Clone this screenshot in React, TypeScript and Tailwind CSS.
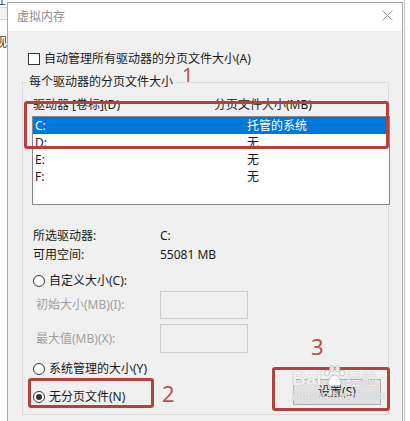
import React from 'react'

function Radio({ label, checked = false }: { label: string; checked?: boolean }) {
  return (
    <div className="flex h-[16px] items-center gap-[4px]">
      <span className="flex h-[12px] w-[12px] items-center justify-center rounded-full border border-[#333333] bg-white">
        {checked && <span className="h-[6px] w-[6px] rounded-full bg-[#333333]" />}
      </span>
      <span className="leading-[16px]">{label}</span>
    </div>
  )
}

const drives = [
  { name: 'C:', size: '托管的系统' },
  { name: 'D:', size: '无' },
  { name: 'E:', size: '无' },
  { name: 'F:', size: '无' },
]

export default function App() {
  return (
    <div className="relative flex h-[421px] w-[410px] overflow-hidden bg-white font-['Noto_Sans','Noto_Sans_CJK_SC',sans-serif] text-[12px] text-[#1a1a1a]">
      {/* window behind, left edge */}
      <div className="flex w-[7px] shrink-0 flex-col overflow-hidden bg-white text-[#333333]">
        <div className="h-[8px] overflow-hidden border-b border-[#d6d6d6]">
          <span className="-ml-[6px] -mt-[6px] block whitespace-nowrap leading-[12px]">性</span>
        </div>
        <div className="h-[12px] border-b border-[#d6d6d6] bg-[#f3f3f3]" />
        <div className="mt-[16px] overflow-hidden">
          <span className="-ml-[5px] block whitespace-nowrap leading-[14px]">视</span>
        </div>
      </div>

      {/* dialog */}
      <div className="mt-[2px] flex w-[396px] shrink-0 flex-col border-x border-t border-[#a8a8a8]">
        <div className="flex h-[28px] shrink-0 items-center justify-between bg-white pl-[9px] pr-[9px]">
          <span className="leading-[14px] text-[#8c8c8c]">虚拟内存</span>
          <svg width="11" height="11" viewBox="0 0 11 11" className="-mt-[3px]">
            <path d="M0.5 0.5L10.5 10.5M10.5 0.5L0.5 10.5" stroke="#9a9a9a" strokeWidth="1" fill="none" />
          </svg>
        </div>

        <div className="flex flex-1 flex-col bg-[#f0f0f0]">
          <div className="ml-[20px] mt-[22px] flex h-[12px] items-center gap-[4px]">
            <span className="h-[12px] w-[12px] border border-[#333333] bg-white" />
            <span className="leading-[14px]">自动管理所有驱动器的分页文件大小(A)</span>
          </div>

          <fieldset className="ml-[14px] mt-[10px] w-[367px] min-w-0 border border-[#dcdcdc]">
            <legend className="ml-[4px] px-[2px] leading-[14px]">每个驱动器的分页文件大小</legend>
            <div className="flex flex-col pb-[9px]">
              <div className="mt-[9px] flex h-[14px] items-center pl-[10px] leading-[14px]">
                <span className="w-[181px]">驱动器 [卷标](D)</span>
                <span>分页文件大小(MB)</span>
              </div>

              <div className="ml-[9px] mt-[4px] h-[89px] w-[358px] border border-[#828790] bg-white">
                {drives.map((d, i) => (
                  <div
                    key={d.name}
                    className={`flex h-[17px] items-center leading-[17px] ${i === 0 ? 'bg-[#0078d7] text-white' : ''}`}
                  >
                    <span className="w-[214px] pl-[2px]">{d.name}</span>
                    <span>{d.size}</span>
                  </div>
                ))}
              </div>

              <div className="mt-[23px] flex h-[16px] items-center pl-[10px] leading-[16px]">
                <span className="w-[127px]">所选驱动器:</span>
                <span>C:</span>
              </div>
              <div className="mt-[3px] flex h-[16px] items-center pl-[10px] leading-[16px]">
                <span className="w-[127px]">可用空间:</span>
                <span>55081 MB</span>
              </div>

              <div className="mt-[10px] pl-[10px]">
                <Radio label="自定义大小(C):" />
              </div>
              <div className="mt-[2px] flex items-center pl-[13px] text-[#a0a0a0]">
                <span className="w-[124px] leading-[16px]">初始大小(MB)(I):</span>
                <span className="h-[28px] w-[88px] border border-[#cccccc] bg-[#f0f0f0]" />
              </div>
              <div className="mt-[5px] flex items-center pl-[13px] text-[#a0a0a0]">
                <span className="w-[124px] leading-[16px]">最大值(MB)(X):</span>
                <span className="h-[29px] w-[88px] border border-[#cccccc] bg-[#f0f0f0]" />
              </div>

              <div className="mt-[8px] flex items-end justify-between">
                <div className="flex flex-col pl-[10px]">
                  <Radio label="系统管理的大小(Y)" />
                  <div className="mt-[12px]">
                    <Radio checked label="无分页文件(N)" />
                  </div>
                </div>
                <button className="mr-[7px] h-[26px] w-[88px] border border-[#adadad] bg-[#e1e1e1] leading-[16px] text-[#1a1a1a]">
                  设置(S)
                </button>
              </div>
            </div>
          </fieldset>
        </div>
      </div>

      {/* window behind, right edge */}
      <div className="flex w-[7px] shrink-0 bg-white">
        <div className="ml-[1px] h-full w-px bg-[#c4c4c4]" />
      </div>

      {/* annotations */}
      <div className="pointer-events-none absolute left-[24px] top-[101px] h-[48px] w-[365px] rounded-[3px] border-[3px] border-[#b5413f]" />
      <div className="pointer-events-none absolute left-[28px] top-[378px] h-[30px] w-[126px] rounded-[3px] border-[3px] border-[#b5413f]" />
      <div className="pointer-events-none absolute left-[272px] top-[367px] h-[44px] w-[118px] rounded-[3px] border-[3px] border-[#b5413f]" />
      <span className="absolute left-[182px] top-[63px] text-[20px] leading-[24px] text-[#c0504d]">1</span>
      <span className="absolute left-[162px] top-[380px] text-[22px] leading-[26px] text-[#c0504d]">2</span>
      <span className="absolute left-[311px] top-[333px] text-[22px] leading-[26px] text-[#c0504d]">3</span>

      {/* watermark */}
      <div className="pointer-events-none absolute left-[292px] top-[364px] flex flex-col text-white/85 [text-shadow:0_0_1px_#9a9a9a]">
        <div className="flex items-end">
          <span className="font-['Liberation_Sans',sans-serif] text-[19px] font-bold leading-[20px]">Bai</span>
          <svg width="24" height="24" viewBox="0 0 24 24" className="mb-[1px]">
            <g fill="#ffffff" fillOpacity="0.85" stroke="#b0b0b0" strokeWidth="0.8">
              <ellipse cx="5" cy="9" rx="2.4" ry="3" />
              <ellipse cx="10" cy="4.5" rx="2.4" ry="3" />
              <ellipse cx="15.5" cy="4.5" rx="2.4" ry="3" />
              <ellipse cx="20" cy="9" rx="2.4" ry="3" />
              <path d="M12.5 11c3.5 0 7 5 6.5 8.5-.4 2.6-3.5 2.8-6.5 2.3-3 .5-6.1.3-6.5-2.3C5.5 16 9 11 12.5 11z" />
            </g>
          </svg>
          <span className="text-[16px] leading-[20px]">经验</span>
        </div>
        <span className="font-['Liberation_Sans',sans-serif] text-[11px] leading-[13px] tracking-[0.3px]">jingyan.baidu.com</span>
      </div>
    </div>
  )
}
